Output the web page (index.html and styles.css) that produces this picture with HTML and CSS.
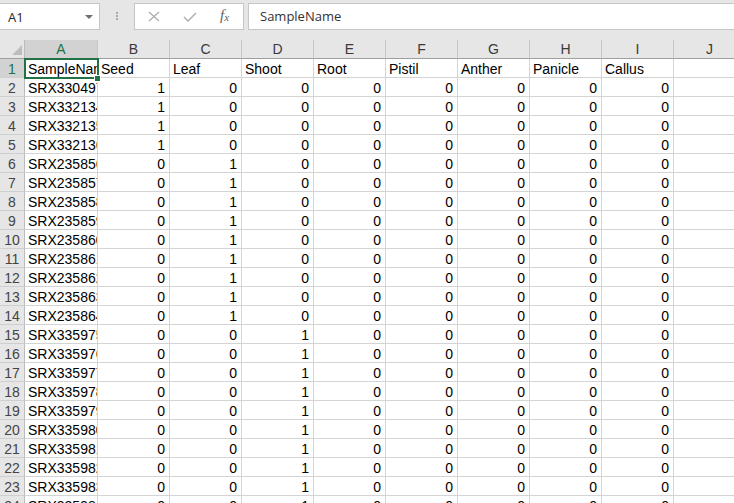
FILE: index.html
```html
<!DOCTYPE html>
<html lang="en">
<head>
  <meta charset="UTF-8" />
  <meta name="viewport" content="width=device-width, initial-scale=1.0"/>
  <title>Sample tissues - Excel</title>
  <link rel="stylesheet" href="styles.css">
</head>
<body>
  <!-- name box + formula bar -->
  <div class="formula-bar">
    <div class="name-box">
      <span>A1</span>
      <span class="caret"></span>
    </div>
    <div class="grip"><i></i><i></i><i></i></div>
    <div class="fx-buttons">
      <svg class="ico" width="12" height="11" viewBox="0 0 12 11">
        <path d="M1 1 L11 10 M11 1 L1 10" stroke="#ababab" stroke-width="1.2" fill="none"/>
      </svg>
      <svg class="ico" width="14" height="10" viewBox="0 0 14 10">
        <path d="M1 5 L5 9 L13 1" stroke="#b3b3b3" stroke-width="1.6" fill="none"/>
      </svg>
      <span class="fx">f<sub>x</sub></span>
    </div>
    <div class="formula-input">SampleName</div>
  </div>

  <!-- grid -->
  <div class="sheet" id="sheet">
    <div class="row head">
      <div class="rh corner"><span class="tri"></span></div>
      <div class="ch col-a sel">A</div>
      <div class="ch">B</div>
      <div class="ch">C</div>
      <div class="ch">D</div>
      <div class="ch">E</div>
      <div class="ch">F</div>
      <div class="ch">G</div>
      <div class="ch">H</div>
      <div class="ch">I</div>
      <div class="ch">J</div>
    </div>
    <div class="selection"></div>
    <div class="handle"></div>
  </div>

  <script>
    const titles = ['SampleName', 'Seed', 'Leaf', 'Shoot', 'Root', 'Pistil', 'Anther', 'Panicle', 'Callus'];
    const ids = [
      'SRX330497', 'SRX332134', 'SRX332135', 'SRX332136',
      'SRX235856', 'SRX235857', 'SRX235858', 'SRX235859', 'SRX235860',
      'SRX235861', 'SRX235862', 'SRX235863', 'SRX235864',
      'SRX335975', 'SRX335976', 'SRX335977', 'SRX335978', 'SRX335979',
      'SRX335980', 'SRX335981', 'SRX335982', 'SRX335983', 'SRX335984'
    ];

    // which tissue column (1 = Seed) is set for each sample
    function tissueOf(i) {
      if (i < 4) return 1;
      if (i < 13) return 2;
      return 3;
    }

    const sheet = document.getElementById('sheet');
    const sel = sheet.querySelector('.selection');
    let html = '';

    // row 1: titles
    html += '<div class="row"><div class="rh sel">1</div>';
    titles.forEach((t, c) => {
      html += `<div class="c txt${c === 0 ? ' col-a' : ''}">${t}</div>`;
    });
    html += '<div class="c"></div></div>';

    ids.forEach((id, i) => {
      const t = tissueOf(i);
      html += `<div class="row"><div class="rh">${i + 2}</div>`;
      html += `<div class="c txt col-a">${id}</div>`;
      for (let c = 1; c <= 8; c++) {
        html += `<div class="c num">${c === t ? 1 : 0}</div>`;
      }
      html += '<div class="c"></div></div>';
    });

    sel.insertAdjacentHTML('beforebegin', html);
  </script>
</body>
</html>
```

FILE: styles.css
```css
* {
  box-sizing: border-box;
}

body {
  margin: 0;
  width: 734px;
  height: 503px;
  overflow: hidden;
  background: #e6e6e6;
  font-family: "Liberation Sans", Arial, sans-serif;
}

/* ---------- formula bar ---------- */
.formula-bar {
  display: flex;
  align-items: flex-start;
  height: 40px;
  padding-top: 3px;
}

.name-box {
  display: flex;
  align-items: center;
  justify-content: space-between;
  width: 100px;
  height: 27px;
  padding: 0 6px 0 8px;
  background: #fff;
  border: 1px solid #c6c6c6;
  border-left: none;
  font-family: "Open Sans", "Noto Sans", sans-serif;
  font-size: 13px;
  color: #262626;
}

.caret {
  width: 0;
  height: 0;
  border-left: 4px solid transparent;
  border-right: 4px solid transparent;
  border-top: 4px solid #6f6f6f;
}

.grip {
  display: flex;
  flex-direction: column;
  align-items: center;
  gap: 1px;
  width: 34px;
  padding-top: 9px;
}

.grip i {
  width: 2px;
  height: 2px;
  background: #a9a9a9;
}

.fx-buttons {
  display: flex;
  align-items: center;
  width: 110px;
  height: 27px;
  padding-left: 13px;
  background: #fff;
  border: 1px solid #c6c6c6;
}

.fx-buttons .ico {
  margin-right: 23px;
}

.fx {
  font-family: "Liberation Serif", serif;
  font-style: italic;
  font-size: 15px;
  color: #606060;
  margin-top: -3px;
}

.fx sub {
  font-size: 11px;
  vertical-align: -1px;
}

.formula-input {
  flex: 1;
  height: 27px;
  margin-left: 4px;
  padding-left: 11px;
  background: #fff;
  border: 1px solid #c6c6c6;
  border-right: none;
  font-family: "Open Sans", "Noto Sans", sans-serif;
  font-size: 13px;
  line-height: 24px;
  color: #333;
}

/* ---------- grid ---------- */
.sheet {
  position: relative;
  background: #fff;
}

.row {
  display: flex;
  height: 19px;
}

.rh,
.ch,
.c {
  flex: none;
  height: 19px;
  overflow: hidden;
  white-space: nowrap;
}

.rh {
  width: 25px;
  background: #e6e6e6;
  border-right: 1px solid #bcbcbc;
  border-bottom: 1px solid #cfcfcf;
  text-align: center;
  font-size: 14px;
  line-height: 20px;
  color: #444;
}

.ch {
  width: 72px;
  background: #e6e6e6;
  border-right: 1px solid #c6c6c6;
  border-bottom: 1px solid #9f9f9f;
  text-align: center;
  font-size: 14px;
  line-height: 19px;
  color: #3a3a3a;
}

.col-a {
  width: 73px;
}

.corner {
  position: relative;
  border-bottom-color: #9f9f9f;
}

.tri {
  position: absolute;
  right: 2px;
  bottom: 3px;
  width: 0;
  height: 0;
  border-left: 10px solid transparent;
  border-bottom: 10px solid #bdbdbd;
}

.ch.sel {
  background: #d2d2d2;
  color: #217346;
  border-bottom: 1px solid #217346;
}

.rh.sel {
  background: #d2d2d2;
  color: #217346;
  border-right: 1px solid #217346;
}

.c {
  width: 72px;
  border-right: 1px solid #d4d4d4;
  border-bottom: 1px solid #d4d4d4;
  font-size: 14px;
  line-height: 20px;
  color: #000;
}

.c.col-a {
  width: 73px;
}

.txt {
  padding-left: 3px;
}

.num {
  text-align: right;
  padding-right: 4px;
}

/* active cell A1 */
.selection {
  position: absolute;
  left: 24px;
  top: 18px;
  width: 75px;
  height: 21px;
  border: 2px solid #217346;
}

.handle {
  position: absolute;
  left: 94px;
  top: 35px;
  width: 7px;
  height: 7px;
  background: #217346;
  border: 1px solid #fff;
}
```
